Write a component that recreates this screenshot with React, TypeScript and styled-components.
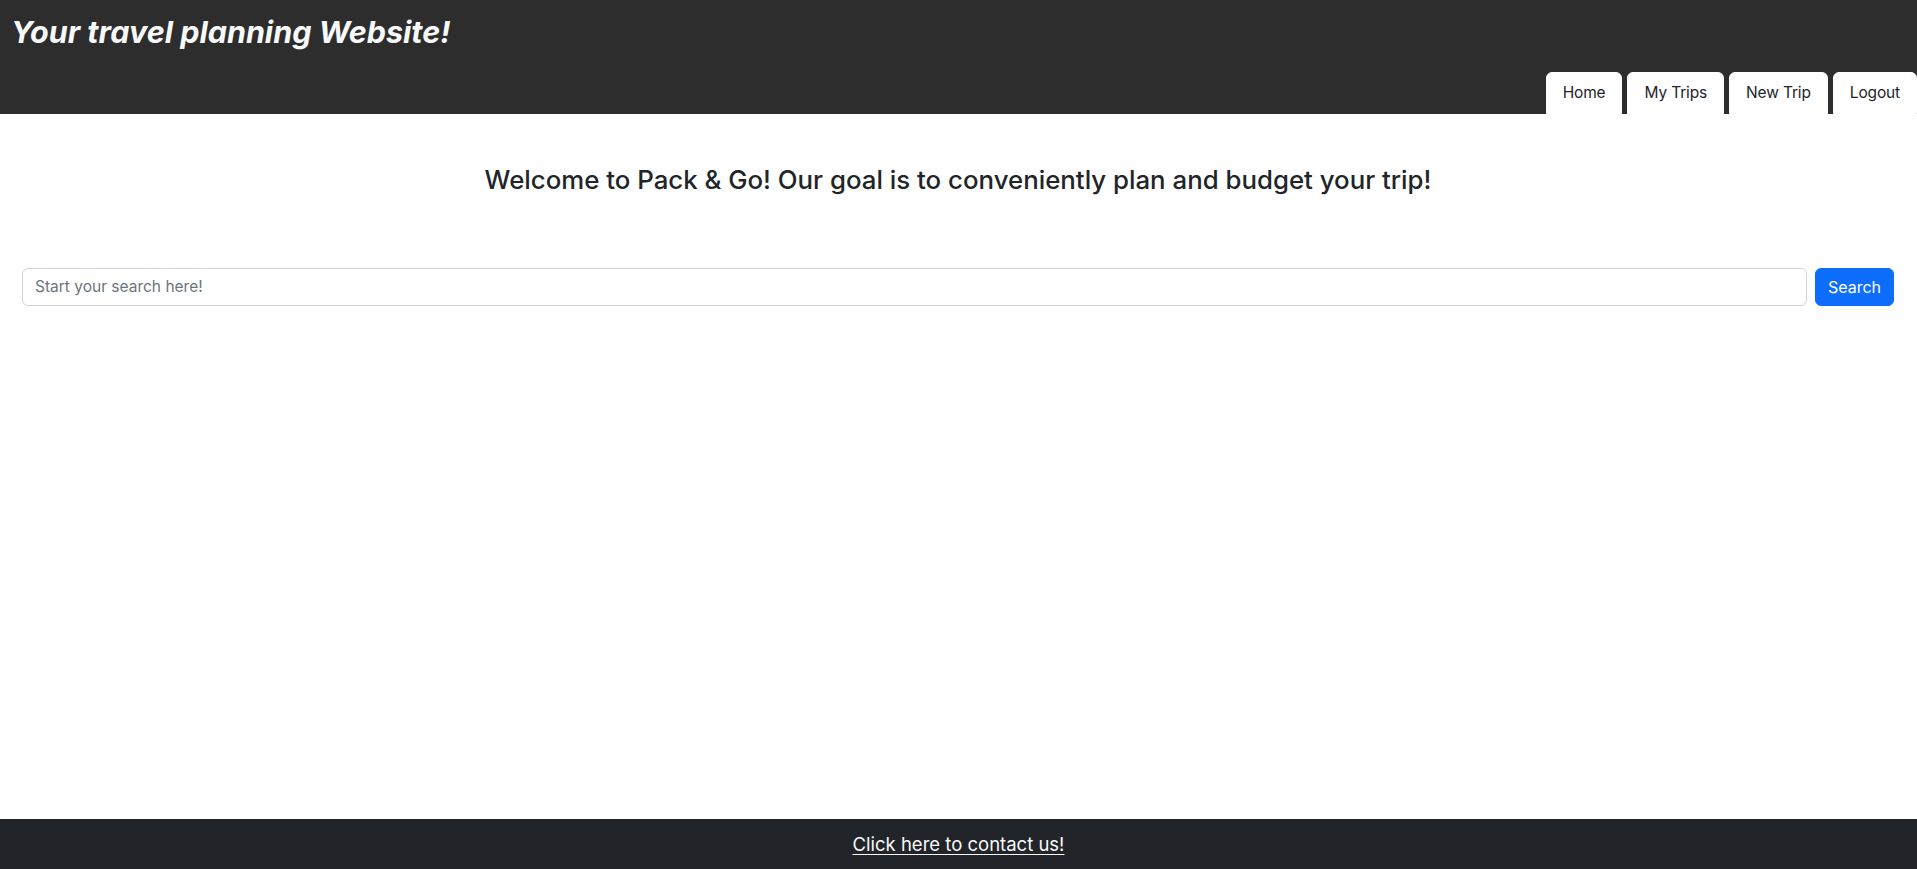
import React from "react";
import styled, { createGlobalStyle } from "styled-components";

const GlobalStyle = createGlobalStyle`
  html, body { margin: 0; padding: 0; }
  body {
    font-family: Inter, "Noto Sans", "Liberation Sans", sans-serif;
    color: #212529;
    background: #ffffff;
  }
  * { box-sizing: border-box; }
`;

const Page = styled.div`
  display: flex;
  flex-direction: column;
  min-height: 869px;
`;

const Header = styled.header`
  background: #2d2d2d;
  height: 114px;
  display: flex;
  flex-direction: column;
`;

const Title = styled.h1`
  margin: 0;
  padding: 14px 0 0 11px;
  font-size: 30.5px;
  line-height: 1.2;
  font-weight: 700;
  font-style: italic;
  color: #f8f9fa;
`;

const Nav = styled.nav`
  margin-top: auto;
  display: flex;
  justify-content: flex-end;
  gap: 5px;
`;

const Tab = styled.a`
  display: block;
  background: #ffffff;
  color: #212529;
  font-size: 15.5px;
  letter-spacing: -0.15px;
  line-height: 24px;
  padding: 8px 16px;
  border: 1px solid #ffffff;
  border-radius: 6px 6px 0 0;
  text-decoration: none;
  cursor: pointer;
`;

const Main = styled.main`
  flex: 1;
  padding: 0 23px 0 22px;
`;

const Heading = styled.h3`
  margin: 51px 0 72px;
  text-align: center;
  font-size: 25.8px;
  line-height: 1.2;
  font-weight: 500;
  color: #212529;
`;

const SearchRow = styled.form`
  display: flex;
  gap: 8px;
`;

const SearchInput = styled.input`
  flex: 1;
  height: 38px;
  padding: 6px 12px;
  font-family: inherit;
  font-size: 15.5px;
  color: #212529;
  border: 1px solid #ced4da;
  border-radius: 6px;
  outline: none;
  &::placeholder { color: #6c757d; }
`;

const SearchButton = styled.button`
  height: 38px;
  padding: 6px 12px;
  font-family: inherit;
  font-size: 16px;
  color: #ffffff;
  background: #0d6efd;
  border: 1px solid #0d6efd;
  border-radius: 6px;
  cursor: pointer;
`;

const Footer = styled.footer`
  height: 50px;
  background: #212529;
  display: flex;
  align-items: center;
  justify-content: center;
`;

const ContactLink = styled.a`
  color: #f8f9fa;
  font-size: 18.5px;
  text-decoration: underline;
  text-underline-offset: 3px;
`;

export default function App() {
  return (
    <Page>
      <GlobalStyle />
      <Header>
        <Title>Your travel planning Website!</Title>
        <Nav>
          <Tab>Home</Tab>
          <Tab>My Trips</Tab>
          <Tab>New Trip</Tab>
          <Tab>Logout</Tab>
        </Nav>
      </Header>
      <Main>
        <Heading>Welcome to Pack &amp; Go! Our goal is to conveniently plan and budget your trip!</Heading>
        <SearchRow onSubmit={(e) => e.preventDefault()}>
          <SearchInput placeholder="Start your search here!" />
          <SearchButton type="submit">Search</SearchButton>
        </SearchRow>
      </Main>
      <Footer>
        <ContactLink href="#">Click here to contact us!</ContactLink>
      </Footer>
    </Page>
  );
}
